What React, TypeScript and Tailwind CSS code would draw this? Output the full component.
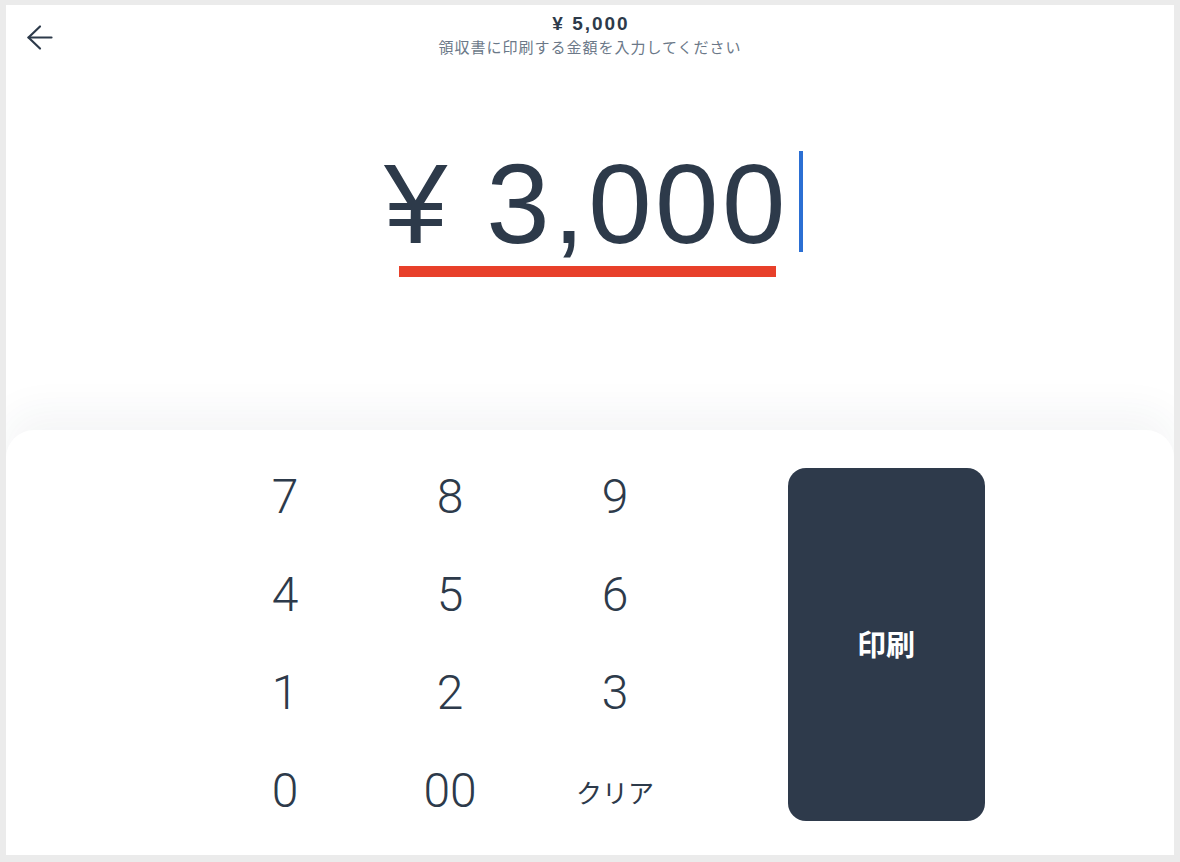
import React from "react";

const keys = ["7", "8", "9", "4", "5", "6", "1", "2", "3", "0", "00", "クリア"];

export default function App() {
  return (
    <div className="w-[1180px] h-[862px] border-t-[5px] border-x-[6px] border-b-[7px] border-[#ebebeb] bg-white flex flex-col font-['Liberation_Sans','Noto_Sans_CJK_JP',sans-serif] text-[#2d3a4a] overflow-hidden">
      <div className="flex-1 flex flex-col">
        <div className="grid grid-cols-[1fr_auto_1fr] items-start pt-[9px]">
          <div className="pl-[20px] pt-[10px]">
            <svg width="28" height="28" viewBox="0 0 28 28" fill="none" stroke="#2d3a4a" strokeWidth="2.2" strokeLinecap="round" strokeLinejoin="round">
              <path d="M2.5 13.5H25.5" />
              <path d="M14 2.5L2.5 13.5L14 24.5" />
            </svg>
          </div>
          <div className="flex flex-col items-center">
            <div className="text-[19px] font-bold leading-[20px] tracking-[2px] pl-[2px]">¥ 5,000</div>
            <div className="text-[15px] leading-[20px] mt-[3px] text-[#6b7888] font-['Noto_Sans_CJK_JP',sans-serif] tracking-[1px]">
              領収書に印刷する金額を入力してください
            </div>
          </div>
          <div />
        </div>
        <div className="flex justify-center pl-[7px] mt-[90px]">
          <div className="flex items-start">
            <div className="flex flex-col">
              <div className="text-[114px] leading-none tracking-[3.5px] whitespace-pre">¥ 3,000</div>
              <div className="ml-[15px] mt-[5px] w-[377px] h-[11px] bg-[#e8402a]" />
            </div>
            <div className="ml-[10px] mt-[4px] w-[4px] h-[101px] bg-[#2b6fd3]" />
          </div>
        </div>
      </div>
      <div className="h-[425px] rounded-t-[28px] bg-white shadow-[0_-18px_40px_rgba(40,55,75,0.05)] flex justify-center pl-[7px] pt-[18px] pb-[15px]">
        <div className="flex items-center gap-[90px]">
          <div className="grid grid-cols-[165px_165px_165px] grid-rows-[98px_98px_98px_98px]">
            {keys.map((k) => (
              <div
                key={k}
                className={
                  k === "クリア"
                    ? "flex items-center justify-center text-[26px] font-['Noto_Sans_CJK_JP',sans-serif] font-normal"
                    : "flex items-center justify-center text-[48px] font-['Roboto',sans-serif] font-light"
                }
              >
                {k}
              </div>
            ))}
          </div>
          <div className="w-[197px] h-[353px] rounded-[18px] bg-[#2e3a4b] flex items-center justify-center text-white text-[29px] font-bold font-['Noto_Sans_CJK_JP',sans-serif]">
            印刷
          </div>
        </div>
      </div>
    </div>
  );
}
